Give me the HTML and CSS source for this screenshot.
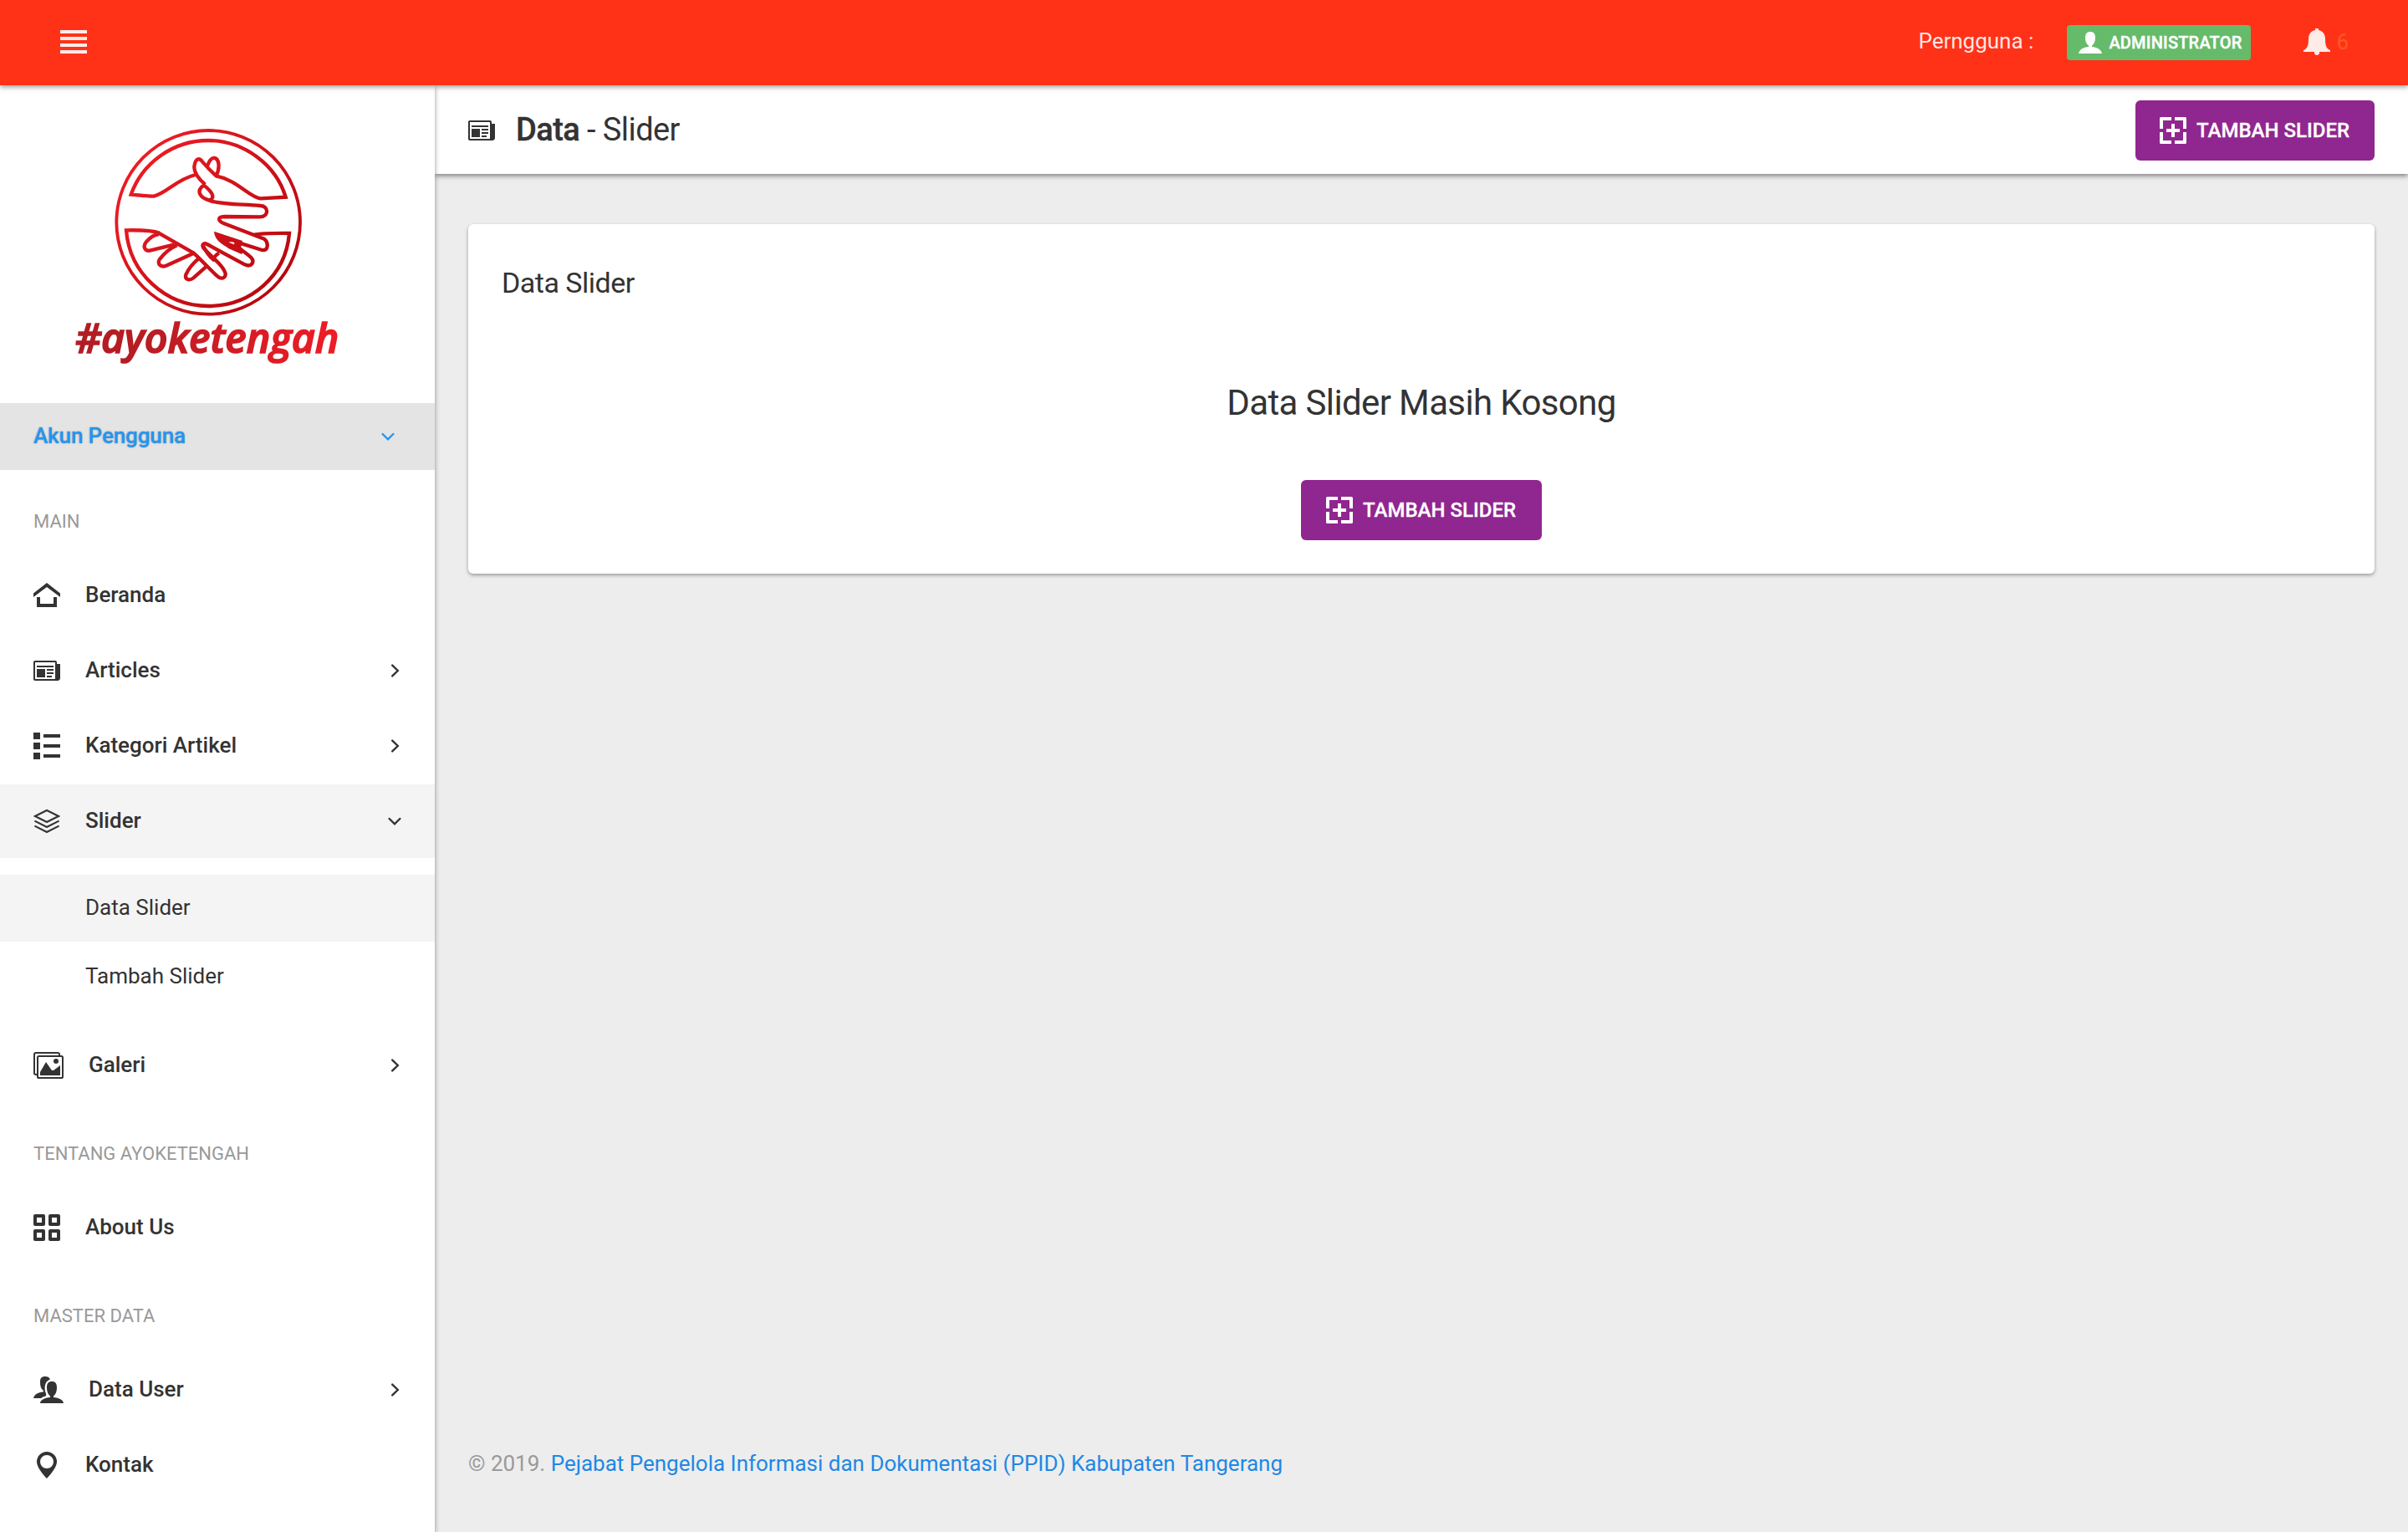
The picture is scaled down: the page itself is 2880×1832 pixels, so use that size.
FILE: index.html
```html
<!DOCTYPE html>
<html lang="id">
<head>
<meta charset="utf-8">
<title>Data Slider</title>
<link rel="stylesheet" href="styles.css">
</head>
<body>
<svg class="sprite" aria-hidden="true">
  <symbol id="i-news" viewBox="0 0 16 16"><path d="M14 4V3c0-.55-.45-1-1-1H1c-.55 0-1 .45-1 1v10c0 .55.45 1 1 1h13.500c.83 0 1.500-.67 1.500-1.500V4zM13 13H1V3h12z" /><path d="M2 5h10v1H2zM8 7h4v1H8zM8 9h4v1H8zM8 11h3v1H8zM2 7h5v5H2z"/></symbol>
  <symbol id="i-plus" viewBox="0 0 16 16"><path d="M0 7V.8Q0 0 .8 0H7v2H2v5zM9 0h6.200q.8 0 .8.8V7h-2V2H9zM0 9h2v5h5v2H.8q-.8 0-.8-.8zM14 9h2v6.200q0 .8-.8.8H9v-2h5zM7 4h2v3h3v2H9v3H7V9H4V7h3z"/></symbol>
  <symbol id="i-right" viewBox="0 0 16 16"><path d="M6.600 4.800 9.900 8 6.600 11.200" fill="none" stroke="currentColor" stroke-width="1.200" stroke-linecap="round"/></symbol>
  <symbol id="i-down" viewBox="0 0 16 16"><path d="M4.800 6.500 8 9.700l3.200-3.200" fill="none" stroke="currentColor" stroke-width="1.200" stroke-linecap="round"/></symbol>
</svg>

<header class="navbar">
  <svg class="icon" viewBox="0 0 16 16"><path d="M0 1h16v2H0zM0 5h16v2H0zM0 9h16v2H0zM0 13h16v2H0z"/></svg>
  <div class="navbar-right">
    <span class="who">Perngguna :</span>
    <span class="badge">
      <svg class="badge-icon" viewBox="0 0 28 26"><path d="M14 0c4 0 6 2.500 6 7 0 4.500-1.500 8-4 9.500V18c6 .5 11 3 12 8H0c1-5 6-7.500 12-8v-1.500C9.500 15 8 11.500 8 7c0-4.500 2-7 6-7z"/></svg>
      <span>ADMINISTRATOR</span>
    </span>
    <span class="alerts">
      <svg class="icon" viewBox="0 0 32 32"><path d="M14 0h4v2c5 1 8 5 8 10 0 8 1 12 6 14v2H19v2q-1 2-3 2t-3-2v-2H0v-2c5-2 6-6 6-14 0-5 3-9 8-10z"/></svg>
      <span class="count">6</span>
    </span>
  </div>
</header>

<div class="page">
  <aside class="sidebar">
    <div class="brand">
      <svg class="logo" viewBox="0 0 1200 990">
        <defs>
          <linearGradient id="g-mark" gradientUnits="userSpaceOnUse" x1="300" y1="200" x2="830" y2="640">
            <stop offset="0" stop-color="#ed1c24"/><stop offset="1" stop-color="#b5080f"/>
          </linearGradient>
          <linearGradient id="g-word" gradientUnits="userSpaceOnUse" x1="93" y1="0" x2="1032" y2="0">
            <stop offset="0" stop-color="#b11d23"/><stop offset=".25" stop-color="#b81c23"/><stop offset="1" stop-color="#f01c26"/>
          </linearGradient>
        </defs>
        <g fill="none" stroke="url(#g-mark)" stroke-width="13" stroke-linejoin="round">
          <circle cx="567.500" cy="407.500" r="329.500" stroke-width="11.500"/>
          <path stroke-linejoin="miter" d="M521 237C450 255 420 302 372 314Q355 314 290 308C330 195 440 114 567 114S810 200 845 317L755 322C715 318 670 255 595 241"/>
          <path stroke-linejoin="miter" d="M730 453Q760 446 858 447C845 600 720 708 567 708S285 590 273 436Q360 434 392 446"/>
          <path d="M388 445L515 518C550 550 580 585 604 604C620 614 634 602 627 586C615 555 590 545 549 498C543 485 553 481 563 486L698 559C722 570 735 550 721 534C705 518 690 510 672 496"/>
          <path d="M680 482L760 507C784 512 784 480 768 467L620 410C600 400 602 388 625 387L752 388C785 388 785 349 755 348C690 342 610 344 572 329C535 319 528 296 543 281L552 275"/>
          <path d="M552 275C590 305 590 325 568 329M556 272Q515 235 517 208C521 176 536 176 546 190L566 212L595 241C610 215 607 180 590 177Q575 174 563 208"/>
          <path d="M390 450Q368 452 346 476C330 495 340 511 358 509L446 487M455 490Q420 505 392 541C383 560 400 570 416 563L512 520M532 538Q500 565 487 595C482 613 500 618 514 607L558 568M549 492Q565 525 586 542Q588 528 606 518"/>
          <path fill="url(#g-mark)" stroke="none" d="M588 440L690 474L684 500L640 500C605 480 590 465 588 440zM640 479L660 487Q662 482 660 479Q650 476 640 479z" fill-rule="evenodd"/>
          <path d="M640 494L690 516"/>
        </g>
        <text class="wordmark" x="90" y="876" textLength="946" lengthAdjust="spacingAndGlyphs" fill="url(#g-word)" stroke="url(#g-word)" stroke-width="5">#ayoketengah</text>
      </svg>
    </div>

    <a class="account"><span>Akun Pengguna</span><svg class="chev"><use href="#i-down"/></svg></a>

    <nav>
      <div class="nav-head">MAIN</div>
      <a class="item"><svg class="icon" viewBox="0 0 16 16"><path d="M8 .5 0 6.800V9l8-6 8 6V6.800zM2 9h2v4h8V9h2v6H2z"/></svg><span>Beranda</span></a>
      <a class="item"><svg class="icon"><use href="#i-news"/></svg><span>Articles</span><svg class="chev"><use href="#i-right"/></svg></a>
      <a class="item"><svg class="icon" viewBox="0 0 16 16"><path d="M0 0h4v4H0zM6 1h10v2H6zM0 6h4v4H0zM6 7h10v2H6zM0 12h4v4H0zM6 13h10v2H6z"/></svg><span>Kategori Artikel</span><svg class="chev"><use href="#i-right"/></svg></a>
      <a class="item open"><svg class="icon" viewBox="0 0 16 16"><path d="M8 1.500 15 5 8 8.500 1 5zM.7 7.800 8 11.500l7.300-3.700M.7 10.800 8 14.500l7.300-3.700" fill="none" stroke="currentColor" stroke-width="1.050"/></svg><span>Slider</span><svg class="chev"><use href="#i-down"/></svg></a>
      <div class="submenu">
        <a class="subitem current">Data Slider</a>
        <a class="subitem">Tambah Slider</a>
      </div>
      <a class="item"><svg class="icon wide" viewBox="0 0 18 16"><path d="M2.500 13.500h-1q-1 0-1-1V1.500q0-1 1-1h13q1 0 1 1v1" fill="none" stroke="currentColor"/><rect x="2.500" y="2.500" width="15" height="13" rx=".8" fill="none" stroke="currentColor"/><path d="M4 14v-2l3.500-6 3.500 5h1l4-3v6z"/><circle cx="13.500" cy="5.500" r="1.500"/></svg><span>Galeri</span><svg class="chev"><use href="#i-right"/></svg></a>

      <div class="nav-head">TENTANG AYOKETENGAH</div>
      <a class="item"><svg class="icon" viewBox="0 0 16 16"><path fill="none" stroke="currentColor" stroke-width="2" stroke-linejoin="round" d="M1 1h5v5H1zM10 1h5v5h-5zM1 10h5v5H1zM10 10h5v5h-5z"/></svg><span>About Us</span></a>

      <div class="nav-head">MASTER DATA</div>
      <a class="item"><svg class="icon wide" viewBox="0 0 36 32"><path d="M20 3.500C19 1 17 0 14 0 9.500 0 8 2 8 7c0 4.500 1 8 4 10v1.200C5 19 1 21.500 0 26h9q2-1.800 5.500-2.600C16 22.800 15 20 14 18c-1-7 0-12 6-14.500z"/><path d="M22 6c4.500 0 6 2.500 6 7.500 0 4.500-1.500 8-4 10V25c7 .5 11.500 3 12 7H8c.5-4 5-6.500 12-7v-1.500c-2.500-2-4-5.500-4-10C16 8.500 17.500 6 22 6z"/></svg><span>Data User</span><svg class="chev"><use href="#i-right"/></svg></a>
      <a class="item"><svg class="icon" viewBox="0 0 16 16"><path fill-rule="evenodd" d="M8 0a6 6 0 0 0-6 6c0 4 6 10 6 10s6-6 6-10a6 6 0 0 0-6-6zM8 10a4 4 0 1 1 0-8 4 4 0 0 1 0 8z"/></svg><span>Kontak</span></a>
    </nav>
  </aside>

  <main class="main">
    <div class="page-head">
      <svg class="icon"><use href="#i-news"/></svg>
      <h1><b>Data</b> - Slider</h1>
      <a class="btn"><svg class="icon"><use href="#i-plus"/></svg><span>TAMBAH SLIDER</span></a>
    </div>
    <section class="card">
      <h2>Data Slider</h2>
      <div class="empty">
        <h3>Data Slider Masih Kosong</h3>
        <a class="btn"><svg class="icon"><use href="#i-plus"/></svg><span>TAMBAH SLIDER</span></a>
      </div>
    </section>
    <footer>© 2019. <a>Pejabat Pengelola Informasi dan Dokumentasi (PPID) Kabupaten Tangerang</a></footer>
  </main>
</div>
</body>
</html>
```
FILE: styles.css
```css
* { box-sizing: border-box; }
body {
  margin: 0;
  height: 1832px;
  display: flex;
  flex-direction: column;
  overflow: hidden;
  background: #ededed;
  color: #333;
  font: 26px/40px Roboto, sans-serif;
}
h1, h2, h3 { margin: 0; font-weight: 400; letter-spacing: -.015em; }
svg { flex: none; fill: currentColor; }
.sprite { display: none; }
.icon { width: 32px; height: 32px; }
.icon.wide { width: 36px; }

.navbar {
  position: relative;
  z-index: 3;
  flex: none;
  height: 102px;
  padding: 0 71px 0 72px;
  display: flex;
  align-items: center;
  justify-content: space-between;
  background: #ff3218;
  color: rgba(255, 255, 255, .9);
  box-shadow: 0 2px 6px rgba(0, 0, 0, .4);
}
.navbar > .icon { margin-top: -2px; }
.navbar-right { display: flex; align-items: center; }
.who { margin: -4px 40px 0 0; }
.badge {
  width: 220px;
  height: 42px;
  padding-left: 14px;
  display: flex;
  align-items: center;
  gap: 8px;
  border-radius: 4px;
  background: #66bb6a;
  color: #fff;
  font-size: 20px;
  font-weight: 500;
  letter-spacing: .2px;
  -webkit-text-stroke: .4px #fff;
}
.badge-icon { width: 28px; height: 26px; }
.alerts { margin: -2px 0 0 63px; display: flex; align-items: center; gap: 7px; }
.count { color: #ff5722; -webkit-text-stroke: .3px #ff5722; }

.page { flex: 1; display: flex; min-height: 0; }
.sidebar {
  position: relative;
  z-index: 2;
  flex: none;
  width: 520px;
  background: #fff;
  box-shadow: 0 2px 6px rgba(0, 0, 0, .4);
}
.brand { height: 380px; padding: 28px 0 0 60px; }
.logo { display: block; width: 400px; height: 330px; }
.wordmark { font: italic 600 148px "Open Sans", "Noto Sans", sans-serif; }

.account {
  height: 80px;
  padding: 0 40px;
  display: flex;
  align-items: center;
  justify-content: space-between;
  background: #e4e4e4;
  color: #2196f3;
  font-weight: 500;
  letter-spacing: -.12px;
  text-shadow: 0 0 2px rgba(0, 0, 0, .4);
}
.account span { margin-top: -2px; }
.chev { width: 32px; height: 32px; margin-left: auto; }
.nav-head {
  height: 106px;
  padding: 18px 40px 0;
  display: flex;
  align-items: center;
  color: #999;
  font-size: 22px;
}
.item {
  height: 88px;
  padding: 0 32px 0 40px;
  display: flex;
  align-items: center;
  font-weight: 500;
}
.item > span { margin-top: -2px; }
.item > .icon { margin-right: 30px; }
.item + .item { margin-top: 2px; }
.open { background: #f4f4f4; }
.submenu {
  padding: 20px 0 22px;
  display: flex;
  flex-direction: column;
  gap: 2px;
}
.subitem { height: 80px; padding: 19px 0 0 102px; }
.current { background: #f4f4f4; }

.main { flex: 1; display: flex; flex-direction: column; }
.page-head {
  flex: none;
  height: 106px;
  padding: 0 40px;
  display: flex;
  align-items: center;
  background: #fff;
  box-shadow: 0 2px 6px rgba(0, 0, 0, .5);
}
.page-head > .icon { margin-top: 2px; }
.page-head h1 { margin: 0 auto 0 25px; font-size: 38px; }
.page-head b { font-weight: 500; -webkit-text-stroke: .4px #333; }
.btn {
  width: 288px;
  height: 72px;
  padding-left: 30px;
  display: flex;
  align-items: center;
  gap: 12px;
  border-radius: 6px;
  background: #90268f;
  color: #fff;
  font-size: 24px;
  font-weight: 500;
  -webkit-text-stroke: .3px #fff;
}
.page-head .btn { width: 286px; padding-left: 29px; margin-top: 2px; }
.card {
  height: 418px;
  margin: 60px 40px 0;
  padding: 50px 40px 40px;
  display: flex;
  flex-direction: column;
  border-radius: 6px;
  background: #fff;
  box-shadow: 0 2px 4px rgba(0, 0, 0, .35);
}
.card h2 { font-size: 34px; }
.empty {
  margin-top: 104px;
  display: flex;
  flex-direction: column;
  align-items: center;
}
.empty h3 { font-size: 42px; margin-bottom: 72px; }
footer { margin: auto 40px 62px; color: #999; }
footer a { color: #1e88e5; }
```
